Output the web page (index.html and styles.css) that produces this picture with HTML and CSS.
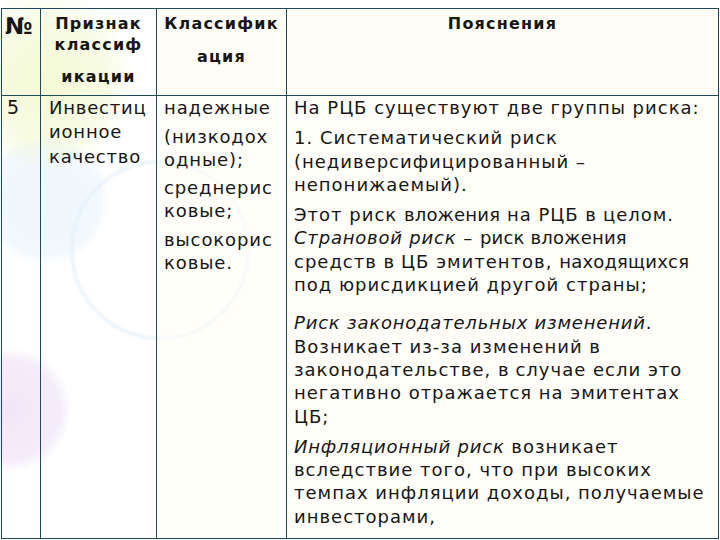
FILE: index.html
```html
<!DOCTYPE html>
<html lang="ru">
<head>
<meta charset="utf-8">
<link rel="stylesheet" href="styles.css">
</head>
<body>
<table class="grid">
  <colgroup>
    <col class="c1"><col class="c2"><col class="c3"><col class="c4">
  </colgroup>
  <thead>
    <tr class="head">
      <th class="num">№</th>
      <th><p>Признак<br>классиф</p><p class="gap">икации</p></th>
      <th><p>Классифик</p><p class="gap2">ация</p></th>
      <th><p>Пояснения</p></th>
    </tr>
  </thead>
  <tbody>
    <tr class="body">
      <td class="c1t">5</td>
      <td class="c2t">Инвестиц<br>ионное<br>качество</td>
      <td class="c3t">
        <p>надежные</p>
        <p>(низкодох<br>одные);</p>
        <p>среднерис<br>ковые;</p>
        <p>высокорис<br>ковые.</p>
      </td>
      <td class="notes">
        <p>На РЦБ существуют две группы риска:</p>
        <p>1. Систематический риск<br>(недиверсифицированный –<br>непонижаемый).</p>
        <p>Этот риск <span class="sm">вложения</span> на РЦБ <span class="sm">в</span> целом.<br><i>Страновой риск</i> – <span class="sm">риск вложения</span><br>средств <span class="sm">в</span> ЦБ эмитентов, <span class="sm">находящихся</span><br>под юрисдикцией другой страны;</p>
        <p class="wide"><i>Риск законодательных изменений</i>.<br>Возникает из-за изменений <span class="sm">в</span><br>законодательстве, <span class="sm">в</span> случае если это<br>негативно отражается на эмитентах<br>ЦБ;</p>
        <p><i>Инфляционный риск</i> возникает<br>вследствие того, что при высоких<br>темпах инфляции доходы, получаемые<br>инвесторами,</p>
      </td>
    </tr>
  </tbody>
</table>
</body>
</html>
```

FILE: styles.css
```css
html, body {
  margin: 0;
  height: 540px;
  overflow: hidden;
}
body {
  padding: 8px 0 0 1px;
  box-sizing: border-box;
  font-family: "DejaVu Sans", Verdana, sans-serif;
  color: #161616;
  background-color: #ffffff;
  background-image:
    radial-gradient(circle at 45px 80px, rgba(242, 248, 205, 0.85) 0, rgba(242, 248, 205, 0.55) 60px, rgba(255,255,255,0) 90px),
    radial-gradient(circle at 45px 200px, rgba(226, 240, 250, 0.6) 0, rgba(226, 240, 250, 0.45) 55px, rgba(255,255,255,0) 65px),
    radial-gradient(circle at 10px 410px, rgba(238, 224, 246, 0.8) 0, rgba(238, 224, 246, 0.6) 50px, rgba(255,255,255,0) 62px),
    radial-gradient(circle at 160px 250px, rgba(255,255,255,0) 0, rgba(255,255,255,0) 85px, rgba(228, 240, 250, 0.7) 88px, rgba(255,255,255,0) 92px);
  background-repeat: no-repeat;
}
p { margin: 0; }

.grid {
  border-collapse: collapse;
  table-layout: fixed;
  width: 717px;
  height: 531px;
}
.c1 { width: 39px; }
.c2 { width: 116px; }
.c3 { width: 130px; }
.c4 { width: 432px; }

.grid th, .grid td {
  border: 1px solid #1e4a5c;
  vertical-align: top;
}

.head { height: 87px; }
.head th {
  font-size: 16px;
  font-weight: bold;
  line-height: 21px;
  text-align: center;
  padding: 4px 0 0;
  letter-spacing: 1.2px;
}
.head th.num {
  font-size: 23px;
  text-align: left;
  padding: 7px 0 0 3px;
  letter-spacing: 0;
}
.head .gap { margin-top: 11px; }
.head .gap2 { margin-top: 12px; }
.head th:nth-child(3),
.head th:nth-child(4) { background: rgba(255, 253, 240, 0.6); }

.body td {
  font-size: 18px;
  line-height: 23.3px;
  letter-spacing: 1px;
  padding: 0 0 0 7px;
}
.body td.c1t { padding-left: 5px; font-size: 19px; }
.body td:nth-child(3),
.body td:nth-child(4) { background: rgba(255, 253, 244, 0.5); }
.body td.c2t { line-height: 24.3px; padding-left: 8px; letter-spacing: 0.8px; }
.body td.c3t { line-height: 22.8px; padding: 1px 0 0 7px; letter-spacing: 0.9px; }
.c3t p + p { margin-top: 6px; }
.notes p + p { margin-top: 7px; }
.notes p.wide { margin-top: 15px; }
.notes .sm { letter-spacing: 0.2px; }
.notes i { letter-spacing: 0.8px; }
```
